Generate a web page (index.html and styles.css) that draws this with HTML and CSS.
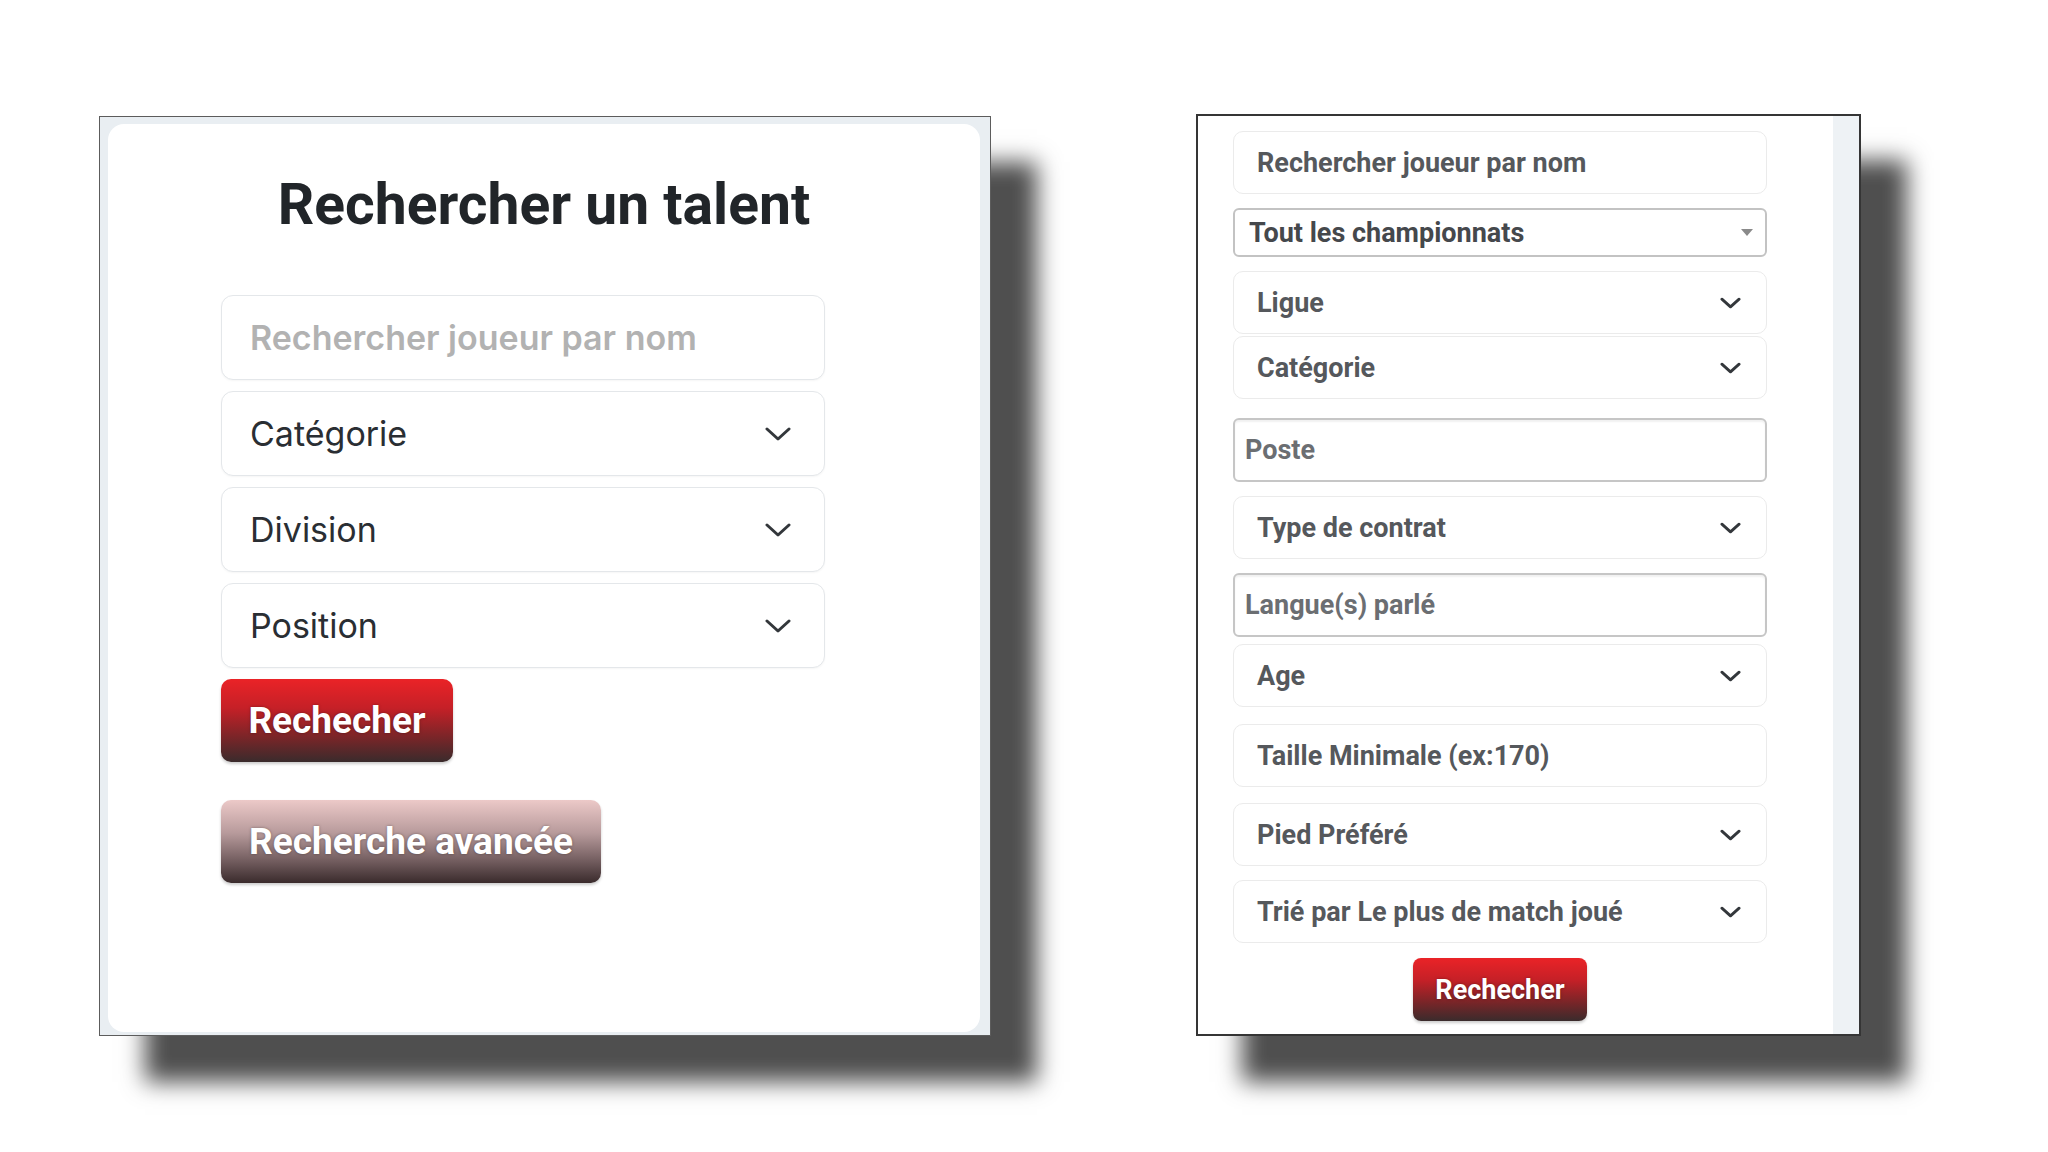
FILE: index.html
```html
<!DOCTYPE html>
<html>
<head>
  <meta charset="UTF-8">
  <title>Rechercher un talent</title>
  <link rel="stylesheet" href="styles.css">
</head>
<body>
  <!-- Simple search -->
  <div class="panel-simple">
    <div class="simple-card">
      <h1>Rechercher un talent</h1>

      <div class="simple-form">
        <input type="text" class="s-field s-input" placeholder="Rechercher joueur par nom">

        <div class="s-field s-select">
          <span>Catégorie</span>
          <svg class="chev-lg" viewBox="0 0 26 14"><path d="M2 2 L13 12 L24 2"/></svg>
        </div>

        <div class="s-field s-select">
          <span>Division</span>
          <svg class="chev-lg" viewBox="0 0 26 14"><path d="M2 2 L13 12 L24 2"/></svg>
        </div>

        <div class="s-field s-select">
          <span>Position</span>
          <svg class="chev-lg" viewBox="0 0 26 14"><path d="M2 2 L13 12 L24 2"/></svg>
        </div>

        <button class="btn-red btn-big btn-search">Rechecher</button>
        <button class="btn-pink btn-big btn-advanced">Recherche avancée</button>
      </div>
    </div>
  </div>

  <!-- Advanced search -->
  <div class="panel-advanced">
    <div class="adv-form">
      <input type="text" class="a-field a-soft" placeholder="Rechercher joueur par nom">

      <div class="a-field a-native">
        <span>Tout les championnats</span>
        <svg class="caret" viewBox="0 0 12 7"><path d="M0 0 L12 0 L6 7 Z"/></svg>
      </div>

      <div class="a-field a-soft a-select tight">
        <span>Ligue</span>
        <svg class="chev-sm" viewBox="0 0 22 12"><path d="M2 2 L11 10 L20 2"/></svg>
      </div>

      <div class="a-field a-soft a-select loose">
        <span>Catégorie</span>
        <svg class="chev-sm" viewBox="0 0 22 12"><path d="M2 2 L11 10 L20 2"/></svg>
      </div>

      <input type="text" class="a-field a-boxed" placeholder="Poste">

      <div class="a-field a-soft a-select">
        <span>Type de contrat</span>
        <svg class="chev-sm" viewBox="0 0 22 12"><path d="M2 2 L11 10 L20 2"/></svg>
      </div>

      <input type="text" class="a-field a-boxed short-gap" placeholder="Langue(s) parlé">

      <div class="a-field a-soft a-select age">
        <span>Age</span>
        <svg class="chev-sm" viewBox="0 0 22 12"><path d="M2 2 L11 10 L20 2"/></svg>
      </div>

      <input type="text" class="a-field a-soft taille" placeholder="Taille Minimale (ex:170)">

      <div class="a-field a-soft a-select">
        <span>Pied Préféré</span>
        <svg class="chev-sm" viewBox="0 0 22 12"><path d="M2 2 L11 10 L20 2"/></svg>
      </div>

      <div class="a-field a-soft a-select last">
        <span>Trié par Le plus de match joué</span>
        <svg class="chev-sm" viewBox="0 0 22 12"><path d="M2 2 L11 10 L20 2"/></svg>
      </div>

      <div class="adv-actions">
        <button class="btn-red btn-small">Rechecher</button>
      </div>
    </div>
    <div class="side-strip"></div>
  </div>
</body>
</html>
```

FILE: styles.css
```css
body {
  margin: 0;
  width: 2048px;
  height: 1152px;
  box-sizing: border-box;
  padding: 114px 0 0 99px;
  background-color: #fff;
  display: flex;
  align-items: flex-start;
  gap: 205px;
  font-family: Roboto, "Liberation Sans", sans-serif;
  overflow: hidden;
}

/* ---------- left panel ---------- */

.panel-simple {
  margin-top: 2px;
  width: 892px;
  height: 920px;
  box-sizing: border-box;
  border: 1px solid #5c5c5c;
  background-color: #e9eef2;
  padding: 7px 10px 3px 8px;
  box-shadow: 46px 46px 22px #4f4f4f;
}

.simple-card {
  height: 100%;
  background-color: #fff;
  border-radius: 16px;
  padding-top: 47px;
  box-sizing: border-box;
}

h1 {
  margin: 0;
  text-align: center;
  font-family: Roboto, sans-serif;
  font-weight: 700;
  font-size: 57px;
  line-height: 68px;
  color: #212529;
}

.simple-form {
  margin: 56px 0 0 113px;
  width: 604px;
  display: flex;
  flex-direction: column;
  align-items: flex-start;
}

.s-field {
  width: 100%;
  height: 85px;
  box-sizing: border-box;
  margin-bottom: 11px;
  border: 1px solid #e4e7ea;
  border-radius: 12px;
  background: #fff;
  box-shadow: 0 1px 2px rgba(0, 0, 0, 0.04);
  padding: 0 33px 0 28px;
  font-family: Inter, "Noto Sans", sans-serif;
  font-size: 34px;
  color: #2a2e33;
}

.s-input {
  outline: none;
  font-weight: 600;
}

.s-input::placeholder {
  color: #b2b2b2;
}

.s-select {
  display: flex;
  align-items: center;
  justify-content: space-between;
}

.chev-lg {
  width: 26px;
  height: 14px;
}

.chev-lg path,
.chev-sm path {
  fill: none;
  stroke: #33373b;
  stroke-width: 3;
  stroke-linecap: round;
  stroke-linejoin: round;
}

button {
  border: none;
  cursor: pointer;
  color: #fff;
  font-family: Roboto, sans-serif;
  font-weight: 700;
  text-shadow: 0 0 3px rgba(0, 0, 0, 0.35);
}

.btn-red {
  background: linear-gradient(#ea2327, #c52027 35%, #7a2528 70%, #3a2b2c);
}

.btn-pink {
  background: linear-gradient(#ecc9c8, #b79a9b 40%, #6f5a5c 75%, #3a2b2c);
}

.btn-big {
  height: 83px;
  border-radius: 10px;
  font-size: 37px;
  padding: 0;
  box-shadow: 0 2px 3px rgba(0, 0, 0, 0.2);
}

.btn-search {
  width: 232px;
}

.btn-advanced {
  margin-top: 38px;
  width: 380px;
}

/* ---------- right panel ---------- */

.panel-advanced {
  width: 665px;
  height: 922px;
  box-sizing: border-box;
  border: 2px solid #353535;
  background-color: #fff;
  display: flex;
  box-shadow: 46px 46px 22px #4f4f4f;
}

.adv-form {
  flex: 1;
  padding: 15px 0 0 35px;
  display: flex;
  flex-direction: column;
}

.side-strip {
  width: 26px;
  background-color: #eef2f5;
}

.a-field {
  width: 534px;
  height: 63px;
  box-sizing: border-box;
  margin-bottom: 14px;
  font-family: Roboto, sans-serif;
  font-weight: 700;
  font-size: 27px;
  color: #55585c;
  background: #fff;
  outline: none;
}

.a-soft {
  border: 1px solid #ebebeb;
  border-radius: 10px;
  padding: 0 25px 0 23px;
}

.a-soft::placeholder {
  color: #55585c;
}

.a-soft.taille {
  margin-bottom: 16px;
}

.a-select {
  display: flex;
  align-items: center;
  justify-content: space-between;
}

.a-select.tight {
  margin-bottom: 2px;
}

.a-select.loose {
  margin-bottom: 19px;
}

.a-select.age {
  margin-bottom: 17px;
}

.a-select.last {
  margin-bottom: 15px;
}

.chev-sm {
  width: 21px;
  height: 12px;
}

.a-native {
  height: 49px;
  margin-bottom: 14px;
  border: 2px solid #c3c3c3;
  border-radius: 6px;
  padding: 0 12px 0 14px;
  display: flex;
  align-items: center;
  justify-content: space-between;
  color: #45484c;
  font-size: 27px;
}

.caret {
  width: 12px;
  height: 7px;
  fill: #8a8a8a;
}

.a-boxed {
  height: 64px;
  border: 2px solid #c6c6c6;
  border-radius: 6px;
  padding: 0 10px;
  box-shadow: inset 0 2px 2px rgba(0, 0, 0, 0.06);
}

.a-boxed::placeholder {
  color: #6b6e72;
}

.a-boxed.short-gap {
  margin-bottom: 7px;
}

.adv-actions {
  width: 534px;
  display: flex;
  justify-content: center;
}

.btn-small {
  width: 174px;
  height: 63px;
  border-radius: 8px;
  font-size: 27px;
  box-shadow: 0 2px 3px rgba(0, 0, 0, 0.2);
}
```
